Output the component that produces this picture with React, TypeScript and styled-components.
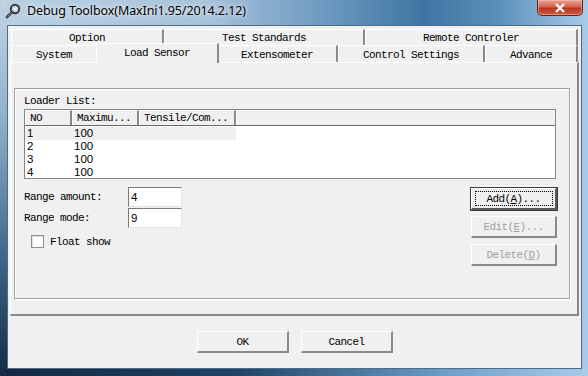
import React, { FunctionComponent } from "react";
import styled, { createGlobalStyle, css } from "styled-components";

const GlobalStyle = createGlobalStyle`
    html, body {
        margin: 0;
        padding: 0;
        background: #6f9cc2;
    }
    * {
        box-sizing: border-box;
    }
`;

const DLG_FONT = `"Liberation Mono", "DejaVu Sans Mono", monospace`;

type TabInfo = { label: string; width: number; selected?: boolean };

const topRow: Array<TabInfo> = [
    { label: "Option", width: 153 },
    { label: "Test Standards", width: 201 },
    { label: "Remote Controler", width: 213 },
];

const bottomRow: Array<TabInfo> = [
    { label: "System", width: 87 },
    { label: "Load Sensor", width: 119, selected: true },
    { label: "Extensometer", width: 121 },
    { label: "Control Settings", width: 147 },
    { label: "Advance", width: 93 },
];

const columns = [
    { label: "NO", width: 47 },
    { label: "Maximu...", width: 67 },
    { label: "Tensile/Com...", width: 97 },
];

const rows = [
    ["1", "100", ""],
    ["2", "100", ""],
    ["3", "100", ""],
    ["4", "100", ""],
];

const App: FunctionComponent = () => {
    return (
        <Window>
            <GlobalStyle />
            <TitleBar>
                <AppIcon viewBox="0 0 16 16">
                    <circle cx="10" cy="6" r="4.2" fill="none" stroke="#3a3a3a" strokeWidth="2" />
                    <circle cx="10" cy="6" r="2" fill="#e8eef4" />
                    <path d="M7.2 8.8 L2 14" stroke="#3a3a3a" strokeWidth="2.6" strokeLinecap="round" />
                    <path d="M7.2 8.8 L2.4 13.6" stroke="#9aa3ab" strokeWidth="0.8" />
                </AppIcon>
                <Title>Debug Toolbox(MaxIni1.95/2014.2.12)</Title>
                <CloseButton>
                    <svg width="12" height="10" viewBox="0 0 12 10">
                        <path d="M2 1 L10 9 M10 1 L2 9" stroke="#fff" strokeWidth="2.4" />
                    </svg>
                </CloseButton>
            </TitleBar>
            <Client>
                <TabStrip>
                    <TabRow>
                        {topRow.map((t) => (
                            <Tab key={t.label} width={t.width}>
                                {t.label}
                            </Tab>
                        ))}
                    </TabRow>
                    <TabRow>
                        {bottomRow.map((t) => (
                            <Tab key={t.label} width={t.width} selected={t.selected}>
                                {t.label}
                            </Tab>
                        ))}
                    </TabRow>
                </TabStrip>
                <Panel>
                    <GroupBox>
                        <Caption>Loader List:</Caption>
                        <ListView>
                            <Header>
                                {columns.map((c) => (
                                    <HeaderCell key={c.label} width={c.width}>
                                        {c.label}
                                    </HeaderCell>
                                ))}
                                <HeaderFill />
                            </Header>
                            <ListBody>
                                {rows.map((r, i) => (
                                    <ListRow key={i} selected={i === 0}>
                                        {r.map((cell, j) => (
                                            <ListCell key={j} width={columns[j].width}>
                                                {cell}
                                            </ListCell>
                                        ))}
                                    </ListRow>
                                ))}
                            </ListBody>
                        </ListView>
                        <Lower>
                            <Fields>
                                <FieldRow>
                                    <FieldLabel>Range amount:</FieldLabel>
                                    <TextBox>4</TextBox>
                                </FieldRow>
                                <FieldRow>
                                    <FieldLabel>Range mode:</FieldLabel>
                                    <TextBox>9</TextBox>
                                </FieldRow>
                                <CheckRow>
                                    <CheckBox />
                                    <span>Float show</span>
                                </CheckRow>
                            </Fields>
                            <ButtonColumn>
                                <SideButton isDefault>
                                    <Focus>
                                        Add(<u>A</u>)...
                                    </Focus>
                                </SideButton>
                                <SideButton disabled>
                                    Edit(<u>E</u>)...
                                </SideButton>
                                <SideButton disabled>
                                    Delete(<u>D</u>)
                                </SideButton>
                            </ButtonColumn>
                        </Lower>
                    </GroupBox>
                </Panel>
                <Footer>
                    <DialogButton>OK</DialogButton>
                    <DialogButton>Cancel</DialogButton>
                </Footer>
            </Client>
        </Window>
    );
};

const Window = styled.div`
    width: 588px;
    height: 376px;
    display: flex;
    flex-direction: column;
    padding: 0 6px 7px 7px;
    background:
        linear-gradient(180deg, #c3d4e3 0px, #8fb0cc 120px, #3e6486 260px, #142b44 376px) left top / 7px 376px no-repeat,
        linear-gradient(90deg, #13283f 0%, #1f4366 40%, #6a9cc6 75%, #a9cbe8 100%) left bottom / 588px 7px no-repeat,
        linear-gradient(
            90deg,
            #b9cfe2 0%,
            #a8c2da 35%,
            #6e9ac0 55%,
            #3f75a3 72%,
            #5c90bb 85%,
            #a9cbe8 100%
        );
    overflow: hidden;
`;

const TitleBar = styled.div`
    height: 25px;
    display: flex;
    align-items: flex-start;
    position: relative;
    margin: 0 -6px 0 -7px;
    padding: 3px 0 0 5px;
`;

const AppIcon = styled.svg`
    width: 16px;
    height: 16px;
    flex: none;
`;

const Title = styled.div`
    margin-left: 6px;
    font-family: "Noto Sans", "Liberation Sans", sans-serif;
    font-size: 12.5px;
    line-height: 16px;
    color: #000;
    text-shadow: 0 0 8px rgba(255, 255, 255, 0.9), 0 0 3px rgba(255, 255, 255, 0.8);
    letter-spacing: -0.1px;
`;

const CloseButton = styled.div`
    position: absolute;
    right: 5px;
    top: 0;
    width: 46px;
    height: 16px;
    border: 1px solid #5b2522;
    border-top: none;
    border-radius: 0 0 5px 5px;
    background: linear-gradient(180deg, #e8a494 0%, #d5624f 45%, #b63522 55%, #cf5a3c 100%);
    box-shadow: inset 0 0 0 1px rgba(255, 200, 190, 0.5);
    display: flex;
    align-items: center;
    justify-content: center;
`;

const Client = styled.div`
    flex: 1;
    background: #f0f0f0;
    border: 1px solid #4d6c88;
    display: flex;
    flex-direction: column;
    padding: 3px 1px 0 1px;
    font-family: ${DLG_FONT};
    font-size: 11px;
    letter-spacing: -0.6px;
    color: #000;
`;

const TabStrip = styled.div`
    display: flex;
    flex-direction: column;
    padding-left: 2px;
`;

const TabRow = styled.div`
    display: flex;
    height: 16px;
    & + & {
        height: 17px;
    }
`;

const Tab = styled.div<{ width: number; selected?: boolean }>`
    width: ${(p) => p.width}px;
    flex: none;
    display: flex;
    align-items: center;
    justify-content: center;
    border-top: 1px solid #ffffff;
    border-left: 1px solid #ffffff;
    border-right: 2px solid #8a8a8a;
    border-top-left-radius: 2px;
    background: #f0f0f0;
    line-height: 14px;
    padding-top: 1px;
    ${(p) =>
        p.selected &&
        css`
            position: relative;
            z-index: 2;
            width: ${p.width + 4}px;
            margin: -2px -2px -1px -2px;
            height: 20px;
            align-items: flex-start;
            padding-top: 2px;
        `}
`;

const Panel = styled.div`
    height: 254px;
    background: #f0f0f0;
    border-top: 1px solid #ffffff;
    border-left: 1px solid #ffffff;
    border-right: 2px solid #8a8a8a;
    border-bottom: 2px solid #8a8a8a;
    margin: 0 1px 0 1px;
    padding: 25px 7px 15px 3px;
    display: flex;
`;

const GroupBox = styled.div`
    flex: 1;
    border: 1px solid #a0a0a0;
    box-shadow: 1px 1px 0 #ffffff, inset 1px 1px 0 #ffffff;
    padding: 6px 13px 0 9px;
    display: flex;
    flex-direction: column;
`;

const Caption = styled.div`
    line-height: 13px;
    height: 14px;
`;

const ListView = styled.div`
    height: 70px;
    border: 1px solid #828790;
    background: #ffffff;
    display: flex;
    flex-direction: column;
    overflow: hidden;
`;

const Header = styled.div`
    display: flex;
    height: 16px;
    flex: none;
    border-bottom: 1px solid #696969;
    background: #f0f0f0;
`;

const HeaderCell = styled.div<{ width: number }>`
    width: ${(p) => p.width}px;
    flex: none;
    border-top: 1px solid #fff;
    border-left: 1px solid #fff;
    border-right: 2px solid #8a8a8a;
    padding-left: 4px;
    line-height: 14px;
    white-space: nowrap;
`;

const HeaderFill = styled.div`
    flex: 1;
    border-top: 1px solid #fff;
    border-left: 1px solid #fff;
`;

const ListBody = styled.div`
    padding-top: 1px;
    font-family: "Liberation Sans", "DejaVu Sans", sans-serif;
    font-size: 11.5px;
    letter-spacing: 0;
`;

const ListRow = styled.div<{ selected?: boolean }>`
    display: flex;
    height: 13px;
    line-height: 13px;
    width: 211px;
    background: ${(p) => (p.selected ? "#efefef" : "transparent")};
`;

const ListCell = styled.div<{ width: number }>`
    width: ${(p) => p.width}px;
    flex: none;
    padding-left: 2px;
`;

const Lower = styled.div`
    display: flex;
    justify-content: space-between;
    padding-top: 8px;
`;

const Fields = styled.div`
    display: flex;
    flex-direction: column;
`;

const FieldRow = styled.div`
    display: flex;
    align-items: center;
    height: 20px;
    & + & {
        margin-top: 1px;
    }
`;

const FieldLabel = styled.div`
    width: 104px;
`;

const TextBox = styled.div`
    width: 54px;
    height: 20px;
    background: #fff;
    border: 1px solid #7a7a7a;
    border-right-color: #e3e3e3;
    border-bottom-color: #e3e3e3;
    padding-left: 2px;
    line-height: 18px;
    font-family: "Liberation Sans", sans-serif;
    font-size: 11.5px;
    letter-spacing: 0;
`;

const CheckRow = styled.div`
    display: flex;
    align-items: center;
    gap: 6px;
    margin: 7px 0 0 7px;
`;

const CheckBox = styled.div`
    width: 13px;
    height: 13px;
    background: #fff;
    border: 1px solid #8e8f8f;
    box-shadow: inset 1px 1px 0 #dcdcdc;
`;

const ButtonColumn = styled.div`
    display: flex;
    flex-direction: column;
    gap: 6px;
    padding-top: 1px;
    margin-right: -1px;
`;

const buttonBase = css`
    width: 86px;
    height: 22px;
    display: flex;
    align-items: center;
    justify-content: center;
    background: #f0f0f0;
    border-top: 1px solid #ffffff;
    border-left: 1px solid #ffffff;
    border-right: 2px solid #8a8a8a;
    border-bottom: 2px solid #8a8a8a;
    font-family: ${DLG_FONT};
    font-size: 11px;
    letter-spacing: -0.6px;
`;

const SideButton = styled.div<{ disabled?: boolean; isDefault?: boolean }>`
    ${buttonBase};
    color: ${(p) => (p.disabled ? "#a0a0a0" : "#000")};
    ${(p) =>
        p.isDefault &&
        css`
            outline: 1px solid #3c3c3c;
            outline-offset: 0;
            border-right-color: #5a5a5a;
            border-bottom-color: #5a5a5a;
        `}
    u {
        text-underline-offset: 1px;
    }
`;

const Focus = styled.span`
    border: 1px dotted #000;
    width: 78px;
    height: 15px;
    display: flex;
    align-items: center;
    justify-content: center;
`;

const Footer = styled.div`
    display: flex;
    gap: 12px;
    padding: 15px 0 0 188px;
`;

const DialogButton = styled.div`
    ${buttonBase};
    width: 92px;
`;

export default App;
